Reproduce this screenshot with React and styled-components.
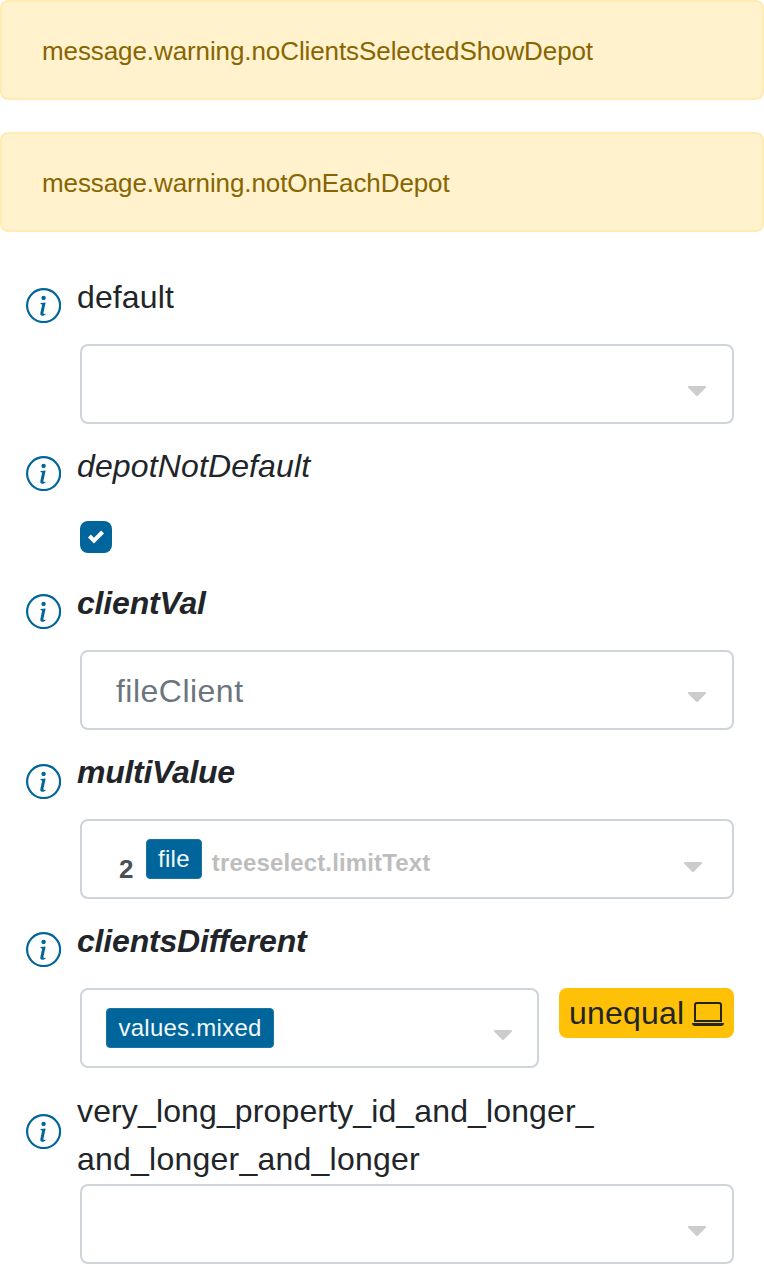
import React from "react";
import styled, { createGlobalStyle } from "styled-components";

const Global = createGlobalStyle`
  * { box-sizing: border-box; }
  body {
    margin: 0;
    background: #fff;
    color: #212529;
    font: 32px/48px "Liberation Sans", Arial, sans-serif;
    font-feature-settings: "liga" 1;
  }
`;

const Page = styled.main`
  width: 764px;
  height: 1274px;
  overflow: hidden;
`;

const Alert = styled.div`
  height: 100px;
  margin-bottom: 32px;
  padding: 30px 40px 0;
  border: 2px solid #ffecb5;
  border-radius: 8px;
  background: #fff2cd;
  color: #876501;
  font-size: 26px;
  line-height: 39px;
  letter-spacing: -0.095px;
`;

const Form = styled.form`
  padding: 9px 30px 0 26px;
`;

const Property = styled.div`
  display: grid;
  grid-template-columns: 36px 1fr;
  column-gap: 15px;
  height: ${(p) => p.$height}px;
`;

const InfoIcon = styled.svg`
  width: 35.2px;
  height: 35.2px;
  margin-top: ${(p) => p.$top}px;
  fill: #00659a;
`;

const Label = styled.label`
  display: block;
  height: ${(p) => p.$height || 71}px;
  font-style: ${(p) => (p.$italic || p.$strong ? "italic" : "normal")};
  font-weight: ${(p) => (p.$strong ? 700 : 400)};
  letter-spacing: ${(p) => p.$spacing ?? (p.$strong ? -0.18 : 0.13)}px;
`;

const LastLine = styled.span`
  display: block;
  letter-spacing: 0.23px;
`;

const Controls = styled.div`
  display: flex;
  align-items: flex-start;
  gap: 20px;
  padding-left: 3px;
`;

const Select = styled.div`
  display: flex;
  flex: 1;
  min-width: 0;
  height: 80px;
  padding: 0 ${(p) => p.$end || 26}px 0 ${(p) => p.$start || 34}px;
  border: 2px solid #ced4da;
  border-radius: 8px;
`;

const Caret = styled.svg`
  flex: none;
  width: 18px;
  height: 18px;
  margin: ${(p) => p.$top || 36}px 0 0 auto;
  fill: #ccc;
`;

const Value = styled.span`
  padding-top: 15px;
  color: #6c757d;
  letter-spacing: 0.48px;
`;

const Count = styled.span`
  width: 27px;
  padding-top: 29px;
  color: #495057;
  font-size: 26px;
  font-weight: 700;
  line-height: 39px;
`;

const Tag = styled.span`
  height: 40px;
  margin-top: 18px;
  padding: 0 11px;
  border: 1px solid #1a75a4;
  border-radius: 4px;
  background: #00659a;
  color: #f4f8fb;
  font-size: 24px;
  line-height: 38px;
  letter-spacing: 0.27px;
`;

const LimitText = styled.span`
  margin-left: 10px;
  padding-top: 24px;
  color: #bdbdbd;
  font-size: 24px;
  font-weight: 700;
  line-height: 36px;
  letter-spacing: 0.15px;
`;

const Checkbox = styled.span`
  display: grid;
  place-items: center;
  width: 32px;
  height: 32px;
  margin-top: 8px;
  border-radius: 8px;
  background: #00659a;
`;

const Badge = styled.span`
  display: flex;
  align-items: center;
  justify-content: space-between;
  width: 175px;
  height: 50px;
  padding: 0 10px;
  border-radius: 8px;
  background: #ffc107;
  letter-spacing: 0.2px;
`;

const Laptop = styled.svg`
  width: 32px;
  height: 32px;
  margin-top: 2px;
  fill: #212529;
`;

const Info = ({ top }) => (
  <InfoIcon viewBox="0 0 16 16" $top={top}>
    <path d="M8 15A7 7 0 1 1 8 1a7 7 0 0 1 0 14m0 1A8 8 0 1 0 8 0a8 8 0 0 0 0 16" />
    <path d="m8.93 6.588-2.29.287-.082.38.45.083c.294.07.352.176.288.469l-.738 3.468c-.194.897.105 1.319.808 1.319.545 0 1.178-.252 1.465-.598l.088-.416c-.2.176-.492.246-.686.246-.275 0-.375-.193-.304-.533zM9 4.5a1 1 0 1 1-2 0 1 1 0 0 1 2 0" />
  </InfoIcon>
);

const Arrow = ({ top }) => (
  <Caret viewBox="0 0 292.362 292.362" $top={top}>
    <path d="M286.935 69.377c-3.614-3.617-7.898-5.424-12.848-5.424H18.274c-4.952 0-9.233 1.807-12.85 5.424C1.807 72.998 0 77.279 0 82.228c0 4.948 1.807 9.229 5.424 12.847l127.907 127.907c3.621 3.617 7.902 5.428 12.85 5.428s9.233-1.811 12.847-5.428L286.935 95.074c3.613-3.617 5.427-7.898 5.427-12.847 0-4.948-1.814-9.229-5.427-12.85z" />
  </Caret>
);

const Row = ({ height = 169, top = 15, label, italic, strong, spacing, labelHeight, children }) => (
  <Property $height={height}>
    <Info top={top} />
    <div>
      <Label $italic={italic} $strong={strong} $spacing={spacing} $height={labelHeight}>{label}</Label>
      <Controls>{children}</Controls>
    </div>
  </Property>
);

export default function App() {
  return (
    <Page>
      <Global />
      <Alert>message.warning.noClientsSelectedShowDepot</Alert>
      <Alert>message.warning.notOnEachDepot</Alert>
      <Form>
        <Row label="default">
          <Select><Arrow /></Select>
        </Row>
        <Row label="depotNotDefault" italic height={137} top={14}>
          <Checkbox>
            <svg width="16" height="16" viewBox="0 0 8 8">
              <path fill="#fff" d="M6.564.75l-3.59 3.612-1.538-1.55L0 4.26l2.974 2.99L8 2.193z" />
            </svg>
          </Checkbox>
        </Row>
        <Row label="clientVal" strong>
          <Select><Value>fileClient</Value><Arrow /></Select>
        </Row>
        <Row label="multiValue" strong spacing={-0.28} top={16}>
          <Select $start={37} $end={30}>
            <Count>2</Count>
            <Tag>file</Tag>
            <LimitText>treeselect.limitText</LimitText>
            <Arrow top={37} />
          </Select>
        </Row>
        <Row label="clientsDifferent" strong height={170}>
          <Select $start={24.4} $end={25}>
            <Tag>values.mixed</Tag>
            <Arrow />
          </Select>
          <Badge>
            unequal
            <Laptop viewBox="0 0 16 16">
              <path d="M13.5 3a.5.5 0 0 1 .5.5V11H2V3.5a.5.5 0 0 1 .5-.5zm-11-1A1.5 1.5 0 0 0 1 3.5V12h14V3.5A1.5 1.5 0 0 0 13.5 2zM0 12.5h16a1.5 1.5 0 0 1-1.5 1.5h-13A1.5 1.5 0 0 1 0 12.5" />
            </Laptop>
          </Badge>
        </Row>
        <Row
          label={<>very_long_property_id_and_longer_<LastLine>and_longer_and_longer</LastLine></>}
          labelHeight={97}
          top={27}
        >
          <Select><Arrow /></Select>
        </Row>
      </Form>
    </Page>
  );
}
